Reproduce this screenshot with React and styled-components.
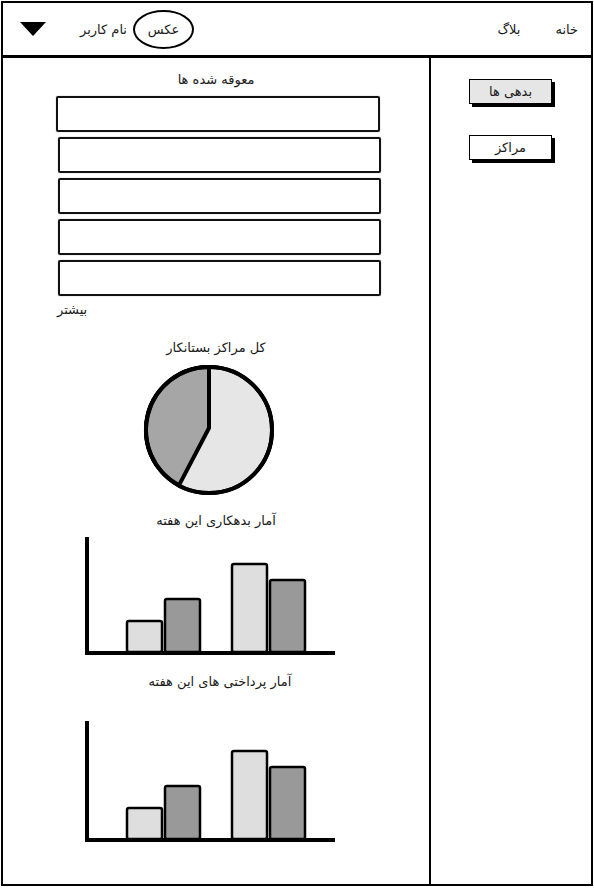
import React from "react";
import styled, { createGlobalStyle } from "styled-components";

const GlobalStyle = createGlobalStyle`
  *, *::before, *::after {
    box-sizing: border-box;
  }
  html, body {
    margin: 0;
    padding: 0;
    background: #ffffff;
  }
  body {
    font-family: "DejaVu Sans", "Noto Sans", sans-serif;
    font-size: 13px;
    color: #1a1a1a;
  }
`;

const Page = styled.div`
  width: 592px;
  margin: 1px 1px 0 1px;
`;

const Header = styled.header`
  display: flex;
  align-items: center;
  justify-content: space-between;
  height: 56px;
  border: 2px solid #000;
  padding: 0 13px 0 17px;
`;

const HeaderGroup = styled.div`
  display: flex;
  align-items: center;
  gap: ${(p) => p.$gap}px;
`;

const Caret = styled.svg`
  width: 26px;
  height: 14px;
  margin-right: 28px;
`;

const Avatar = styled.div`
  display: flex;
  align-items: center;
  justify-content: center;
  width: 61px;
  height: 39px;
  border: 2px solid #000;
  border-radius: 50%;
`;

const NavLink = styled.span`
  direction: rtl;
`;

const Main = styled.div`
  display: flex;
  height: 829px;
  border: 2px solid #000;
  border-top-width: 1px;
`;

const Content = styled.section`
  display: flex;
  flex-direction: column;
  align-items: flex-start;
  width: 428px;
  border-right: 2px solid #000;
`;

const Title = styled.div`
  align-self: stretch;
  direction: rtl;
  text-align: center;
  line-height: 16px;
  margin-top: ${(p) => p.$top}px;
  padding-left: ${(p) => p.$shift || 0}px;
`;

const List = styled.div`
  display: flex;
  flex-direction: column;
  gap: 5px;
  margin-top: 8px;
`;

const ListBox = styled.div`
  height: 36px;
  width: ${(p) => p.$width}px;
  margin-left: ${(p) => p.$left}px;
  border: 2px solid #111;
  border-radius: 2px;
  box-shadow: 0 0 1px rgba(0, 0, 0, 0.6);
`;

const More = styled.div`
  direction: rtl;
  margin: 6px 0 0 54px;
  line-height: 16px;
`;

const Figure = styled.svg`
  display: block;
  margin-top: ${(p) => p.$top}px;
  margin-left: ${(p) => p.$left}px;
`;

const Sidebar = styled.aside`
  display: flex;
  flex-direction: column;
  align-items: flex-start;
  gap: 31px;
  flex: 1;
  padding: 21px 0 0 38px;
`;

const SideButton = styled.div`
  display: flex;
  align-items: center;
  justify-content: center;
  width: 83px;
  height: 25px;
  border: 1.5px solid #000;
  background: ${(p) => (p.$active ? "#e6e6e6" : "#ffffff")};
  box-shadow: 3px 3px 0 #000;
  direction: rtl;
`;

const PieChart = () => {
  const cx = 68;
  const cy = 68;
  const r = 63;
  const a = (208.5 * Math.PI) / 180;
  const ex = cx + r * Math.sin(a);
  const ey = cy - r * Math.cos(a);
  return (
    <Figure width="136" height="136" $top={6} $left={138}>
      <circle cx={cx} cy={cy} r={r} fill="#e6e6e6" stroke="#000" strokeWidth="4" />
      <path
        d={`M${cx} ${cy - 2} L${ex} ${ey} A${r} ${r} 0 0 1 ${cx} ${cy - r} Z`}
        fill="#a6a6a6"
        stroke="#000"
        strokeWidth="4"
        strokeLinejoin="round"
      />
      <circle cx={cx} cy={cy} r={r} fill="none" stroke="#000" strokeWidth="4" />
    </Figure>
  );
};

const barX = [42, 80, 147, 185];
const barFill = ["#dedede", "#999999", "#dedede", "#999999"];

const BarChart = ({ tops, base, height, top }) => (
  <Figure width="252" height={height} $top={top} $left={81}>
    {tops.map((t, i) => (
      <rect
        key={i}
        x={barX[i] + 1}
        y={t}
        width="35"
        height={base - t}
        rx="2"
        fill={barFill[i]}
        stroke="#000"
        strokeWidth="2.5"
      />
    ))}
    <line x1="3" y1="5" x2="3" y2={base + 2} stroke="#000" strokeWidth="4" />
    <line x1="1" y1={base + 1} x2="251" y2={base + 1} stroke="#000" strokeWidth="4" />
  </Figure>
);

const listBoxes = [
  { left: 53, width: 324 },
  { left: 55, width: 323 },
  { left: 55, width: 323 },
  { left: 55, width: 323 },
  { left: 55, width: 323 },
];

export default function App() {
  return (
    <Page>
      <GlobalStyle />
      <Header>
        <HeaderGroup $gap={6}>
          <Caret viewBox="0 0 26 14">
            <polygon points="0,0 26,0 13,14" fill="#000" />
          </Caret>
          <NavLink>نام کاربر</NavLink>
          <Avatar>عکس</Avatar>
        </HeaderGroup>
        <HeaderGroup $gap={35}>
          <NavLink>بلاگ</NavLink>
          <NavLink>خانه</NavLink>
        </HeaderGroup>
      </Header>
      <Main>
        <Content>
          <Title $top={14}>معوقه شده ها</Title>
          <List>
            {listBoxes.map((b, i) => (
              <ListBox key={i} $left={b.left} $width={b.width} />
            ))}
          </List>
          <More>بیشتر</More>
          <Title $top={22}>کل مراکز بستانکار</Title>
          <PieChart />
          <Title $top={15}>آمار بدهکاری این هفته</Title>
          <BarChart tops={[89, 67, 32, 48]} base={120} height={126} top={3} />
          <Title $top={16} $shift={8}>آمار پرداختی های این هفته</Title>
          <BarChart tops={[92, 70, 35, 51]} base={123} height={128} top={26} />
        </Content>
        <Sidebar>
          <SideButton $active>بدهی ها</SideButton>
          <SideButton>مراکز</SideButton>
        </Sidebar>
      </Main>
    </Page>
  );
}
